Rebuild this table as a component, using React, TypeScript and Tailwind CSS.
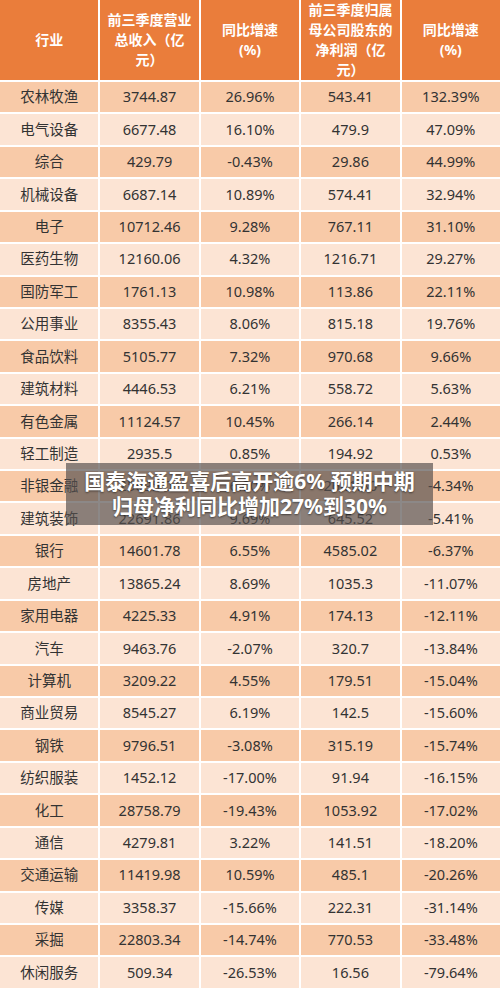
const rows = [
  ["农林牧渔", "3744.87", "26.96%", "543.41", "132.39%"],
  ["电气设备", "6677.48", "16.10%", "479.9", "47.09%"],
  ["综合", "429.79", "-0.43%", "29.86", "44.99%"],
  ["机械设备", "6687.14", "10.89%", "574.41", "32.94%"],
  ["电子", "10712.46", "9.28%", "767.11", "31.10%"],
  ["医药生物", "12160.06", "4.32%", "1216.71", "29.27%"],
  ["国防军工", "1761.13", "10.98%", "113.86", "22.11%"],
  ["公用事业", "8355.43", "8.06%", "815.18", "19.76%"],
  ["食品饮料", "5105.77", "7.32%", "970.68", "9.66%"],
  ["建筑材料", "4446.53", "6.21%", "558.72", "5.63%"],
  ["有色金属", "11124.57", "10.45%", "266.14", "2.44%"],
  ["轻工制造", "2935.5", "0.85%", "194.92", "0.53%"],
  ["非银金融", "25695.01", "6.00%", "2641.80", "-4.34%"],
  ["建筑装饰", "22691.86", "9.69%", "645.52", "-5.41%"],
  ["银行", "14601.78", "6.55%", "4585.02", "-6.37%"],
  ["房地产", "13865.24", "8.69%", "1035.3", "-11.07%"],
  ["家用电器", "4225.33", "4.91%", "174.13", "-12.11%"],
  ["汽车", "9463.76", "-2.07%", "320.7", "-13.84%"],
  ["计算机", "3209.22", "4.55%", "179.51", "-15.04%"],
  ["商业贸易", "8545.27", "6.19%", "142.5", "-15.60%"],
  ["钢铁", "9796.51", "-3.08%", "315.19", "-15.74%"],
  ["纺织服装", "1452.12", "-17.00%", "91.94", "-16.15%"],
  ["化工", "28758.79", "-19.43%", "1053.92", "-17.02%"],
  ["通信", "4279.81", "3.22%", "141.51", "-18.20%"],
  ["交通运输", "11419.98", "10.59%", "485.1", "-20.26%"],
  ["传媒", "3358.37", "-15.66%", "222.31", "-31.14%"],
  ["采掘", "22803.34", "-14.74%", "770.53", "-33.48%"],
  ["休闲服务", "509.34", "-26.53%", "16.56", "-79.64%"],
];

const headers = [
  ["行业"],
  ["前三季度营业", "总收入（亿", "元）"],
  ["同比增速", "(%)"],
  ["前三季度归属", "母公司股东的", "净利润（亿", "元）"],
  ["同比增速", "(%)"],
];

export default function App() {
  return (
    <div className="relative h-[988px] w-[500px] overflow-hidden bg-white font-['Noto_Sans','Noto_Sans_CJK_SC',sans-serif] text-[#333]">
      <div className="flex flex-col gap-[2px]">
        <div className="grid h-[80px] grid-cols-5 gap-x-[2px]">
          {headers.map((lines, i) => (
            <div key={i} className="flex flex-col items-center justify-center bg-[#ea7d3b] text-center text-[14px] font-bold leading-[20px] text-white">
              {lines.map((l) => (
                <span key={l}>{l}</span>
              ))}
            </div>
          ))}
        </div>
        {rows.map((r, ri) => (
          <div key={r[0]} className="grid h-[30.43px] grid-cols-5 gap-x-[2px]">
            {r.map((c, ci) => (
              <div
                key={ci}
                className={`flex items-center justify-center text-[14.5px] ${ri % 2 === 0 ? "bg-[#f8caa8]" : "bg-[#fce4d4]"}`}
              >
                {c}
              </div>
            ))}
          </div>
        ))}
      </div>
      <div className="absolute left-[66px] top-[463px] flex h-[62px] w-[367px] flex-col items-center justify-center bg-[rgba(85,80,78,0.68)] text-[21px] font-bold leading-[25px] text-white [text-shadow:0_1px_2px_rgba(0,0,0,0.5)]">
        <span>国泰海通盈喜后高开逾6% 预期中期</span>
        <span>归母净利同比增加27%到30%</span>
      </div>
    </div>
  );
}
